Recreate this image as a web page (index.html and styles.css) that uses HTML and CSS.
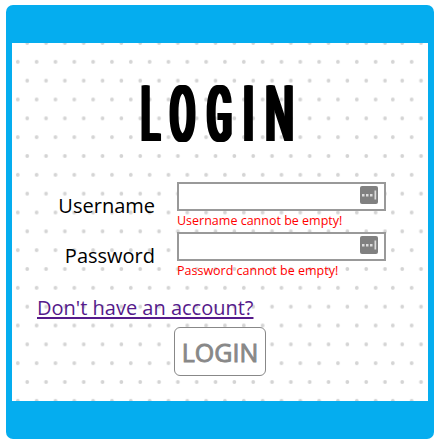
FILE: index.html
```
<!DOCTYPE html>
<html lang="en">
<head>
<meta charset="utf-8">
<title>Login</title>
<link rel="stylesheet" href="styles.css">
</head>
<body>
<main class="card">
<section class="panel">
<svg class="dots" width="416" height="358" aria-hidden="true">
<defs>
<pattern id="dots" width="18.833" height="37.667" patternUnits="userSpaceOnUse">
<circle cx="5.8" cy="18.8" r="1.9"/>
<circle cx="15.2" cy="0" r="1.9"/>
<circle cx="15.2" cy="37.667" r="1.9"/>
</pattern>
</defs>
<rect width="375" height="358" fill="url(#dots)"/>
<rect width="41" height="358" fill="url(#dots)" transform="translate(375 0)"/>
</svg>
<h1 class="title"><span class="cell cell-l"><span class="glyph">L</span></span><span class="cell cell-o"><span class="glyph">O</span></span><span class="cell cell-g"><span class="glyph">G</span></span><span class="cell cell-i"><span class="glyph">I</span></span><span class="cell cell-n"><span class="glyph">N</span></span></h1>
<form class="form">
<div class="row">
<label class="label" for="user">Username</label>
<div class="field">
<div class="control"><input class="input" id="user" type="text"><svg class="key" width="18" height="18"><rect width="18" height="18" rx="2"/><path d="M2 8h2.5v2.5H2zM6 8h2.5v2.5H6zM10 8h2.5v2.5H10zM14.5 4.5h1.7v9h-1.7z"/></svg></div>
<p class="error">Username cannot be empty!</p>
</div>
</div>
<div class="row">
<label class="label" for="pass">Password</label>
<div class="field">
<div class="control"><input class="input" id="pass" type="password"><svg class="key" width="18" height="18"><rect width="18" height="18" rx="2"/><path d="M2 8h2.5v2.5H2zM6 8h2.5v2.5H6zM10 8h2.5v2.5H10zM14.5 4.5h1.7v9h-1.7z"/></svg></div>
<p class="error">Password cannot be empty!</p>
</div>
</div>
<a class="link" href="#">Don't have an account?</a>
<button class="button" type="button">LOGIN</button>
</form>
</section>
</main>
</body>
</html>
```
FILE: styles.css
```
* { box-sizing: border-box; }
body { margin: 0; padding: 5px 6px 7px; background: #fff; font-family: "Open Sans", sans-serif; }
.card { width: 428px; height: 434px; padding: 38px 6px; background: #05adef; border-radius: 7px; }
.panel { position: relative; height: 358px; background: #fff; overflow: hidden; }
.dots { position: absolute; top: 0; left: 0; fill: #d4d4d4; }
.title { position: relative; display: flex; margin: 0; padding: 26px 0 0 128.5px; height: 139px; font: 500 77.4px/91px Roboto, sans-serif; color: #000; }
.cell { display: block; height: 91px; }
.cell-l { width: 29px; --s: .45; --d: 4.5px; }
.cell-o { width: 37.3px; --s: .47; --d: 5px; }
.cell-g { width: 36.7px; --s: .47; --d: 4.6px; }
.cell-i { width: 21.4px; --s: .5; --d: 4px; }
.cell-n { width: 29px; --s: .53; --d: 3.2px; }
.glyph { display: inline-block; transform: scaleX(var(--s)); transform-origin: 0 0; text-shadow: var(--d) 0 #000, calc(var(--d) * -1) 0 #000, calc(var(--d) * .5) 0 #000, calc(var(--d) * -.5) 0 #000; }
.form { position: relative; display: flex; flex-direction: column; }
.row { display: flex; height: 50px; }
.label { width: 143px; margin-right: 22px; padding-top: 10px; font-size: 20px; line-height: 27px; text-align: right; }
.field { width: 209px; }
.control { position: relative; height: 29px; }
.input { display: block; width: 209px; height: 29px; padding: 0 30px 0 4px; border: 2px solid #999; border-radius: 0; background: #fff; outline: 0; }
.key { position: absolute; top: 4px; right: 8px; fill: #808080; }
.key path { fill: #ddd; }
.error { margin: 0; color: #f00; font-size: 12.5px; line-height: 19px; white-space: nowrap; }
.link { align-self: flex-start; margin: 12px 0 0 25px; color: #551a8b; font-size: 20px; line-height: 27px; text-decoration-thickness: 2px; text-decoration-skip-ink: none; text-underline-offset: 2px; }
.button { width: 92px; height: 49px; margin: 6px 0 0 162px; padding: 1px 0 0; border: 1px solid #888; border-radius: 6px; background: #fff; color: #888; font: 400 25px "Open Sans", sans-serif; -webkit-text-stroke: .9px #888; }
```
